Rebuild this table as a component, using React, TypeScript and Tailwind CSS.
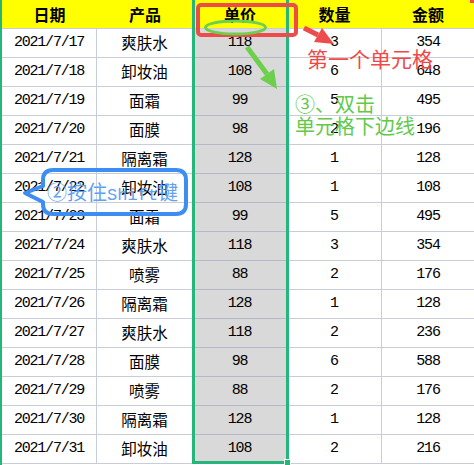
const rows = [
  ['2021/7/17', '爽肤水', '118', '3', '354'],
  ['2021/7/18', '卸妆油', '108', '6', '648'],
  ['2021/7/19', '面霜', '99', '5', '495'],
  ['2021/7/20', '面膜', '98', '2', '196'],
  ['2021/7/21', '隔离霜', '128', '1', '128'],
  ['2021/7/22', '卸妆油', '108', '1', '108'],
  ['2021/7/23', '面霜', '99', '5', '495'],
  ['2021/7/24', '爽肤水', '118', '3', '354'],
  ['2021/7/25', '喷雾', '88', '2', '176'],
  ['2021/7/26', '隔离霜', '128', '1', '128'],
  ['2021/7/27', '爽肤水', '118', '2', '236'],
  ['2021/7/28', '面膜', '98', '6', '588'],
  ['2021/7/29', '喷雾', '88', '2', '176'],
  ['2021/7/30', '隔离霜', '128', '1', '128'],
  ['2021/7/31', '卸妆油', '108', '2', '216'],
]

const widths = ['w-[95px]', 'w-[96px]', 'w-[94px]', 'w-[95px]', 'w-[92px]']
const headers = ['日期', '产品', '单价', '数量', '金额']

const num = "font-['Liberation_Mono',monospace] text-[15px] tracking-[-1.2px]"
const cjk = "font-['Noto_Sans_CJK_SC',sans-serif] text-[15.5px]"

export default function App() {
  return (
    <div className="relative w-[474px] h-[465px] overflow-hidden bg-white border-l-2 border-[#25b67c] text-black">
      {/* header */}
      <div className="flex h-[29px] bg-[#ffff00] border-b border-[#c8cdd9]">
        {headers.map((h, i) => (
          <div
            key={h}
            className={`${widths[i]} flex items-center justify-center font-['Noto_Sans_CJK_SC',sans-serif] font-bold text-[16px]`}
          >
            {h}
          </div>
        ))}
      </div>

      {rows.map((r) => (
        <div key={r[0]} className="flex h-[29px]">
          {r.map((v, i) => (
            <div
              key={i}
              className={`${widths[i]} flex items-center justify-center border-b ${
                i < 4 ? 'border-r' : ''
              } ${i === 2 ? 'bg-[#d9d9d9] border-[#b4b9c7]' : 'border-[#c8cdd9]'} ${
                i === 1 ? cjk : num
              }`}
            >
              {v}
            </div>
          ))}
        </div>
      ))}

      {/* selected column */}
      <div className="absolute left-[190px] top-[-3px] w-[97px] h-[467px] border-[3px] border-[#25b67c]" />
      <div className="absolute left-[282px] top-[459px] w-[7px] h-[7px] bg-[#25b67c] border border-white" />

      {/* annotations */}
      <svg className="absolute left-[-2px] top-0" width="474" height="465" viewBox="0 0 474 465">
        <rect x="198" y="5" width="98" height="30" rx="3" fill="none" stroke="#ee4b4b" strokeWidth="4" />
        <ellipse cx="235.5" cy="27.5" rx="30" ry="6.5" fill="none" stroke="#6cd04c" strokeWidth="3" />
        <line x1="247" y1="47" x2="267" y2="74" stroke="#6cd04c" strokeWidth="5" />
        <polygon points="277,89 274,69 260,79" fill="#6cd04c" />
        <line x1="304" y1="28" x2="318" y2="35" stroke="#ee4b4b" strokeWidth="5" />
        <polygon points="334,44 322,28 314,42" fill="#ee4b4b" />
        <path
          d="M43 186 V180 Q43 170 53 170 H176 Q186 170 186 180 V204 Q186 214 176 214 H53 Q43 214 43 204 V202 L25 193 Z"
          fill="none"
          stroke="#3d8ef2"
          strokeWidth="4"
          strokeLinejoin="round"
        />
        <rect x="470" y="0" width="4" height="3" fill="#ee4b4b" />
      </svg>

      <div className="absolute left-[305px] top-[48px] text-[21px] leading-[21px] text-[#f04848] font-['Noto_Sans_CJK_SC',sans-serif] whitespace-nowrap">
        第一个单元格
      </div>
      <div className="absolute left-[293px] top-[93px] text-[20px] leading-[22px] text-[#62c94a] font-['Noto_Sans_CJK_SC',sans-serif] whitespace-nowrap">
        <div>③、双击</div>
        <div>单元格下边线</div>
      </div>
      <div className="absolute left-[45px] top-[182px] text-[20px] leading-[20px] text-[#5fa2f2] font-['Noto_Sans_CJK_SC',sans-serif] whitespace-nowrap">
        ②按住<span className="font-['Liberation_Mono',monospace] text-[17px]">Shift</span>键
      </div>
    </div>
  )
}
